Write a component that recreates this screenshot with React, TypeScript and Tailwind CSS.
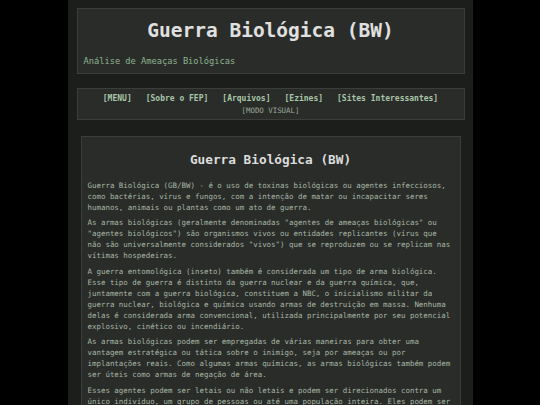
export default function App() {
  const links = ["[MENU]", "[Sobre o FEP]", "[Arquivos]", "[Ezines]", "[Sites Interessantes]"];

  return (
    <div className="min-h-screen bg-black font-['DejaVu_Sans_Mono',monospace]">
      <div className="mx-auto w-[405px] min-h-screen bg-[#1c1e1c] px-[9px] pt-[8px] pr-[8px]">
        <header className="h-[66px] border border-[#3c3e3c] bg-[#2a2c2a] px-[6px] pt-[10px]">
          <h1 className="text-center text-[19.5px] font-bold leading-[24px] text-[#e0e0e0]">
            Guerra Biológica (BW)
          </h1>
          <p className="mt-[12px] text-[8.7px] leading-[12px] text-[#8fb58f]">
            Análise de Ameaças Biológicas
          </p>
        </header>

        <nav className="mt-[14px] h-[32px] border border-[#3c3e3c] bg-[#2a2c2a] pt-[4px] text-center">
          <div className="flex justify-center gap-[14px] text-[8px] font-bold leading-[12px] text-[#a9c6a9]">
            {links.map((l) => (
              <span key={l}>{l}</span>
            ))}
          </div>
          <div className="text-[7.4px] leading-[11px] text-[#9aaa98]">[MODO VISUAL]</div>
        </nav>

        <main className="mx-[4px] mt-[16px] border border-[#3c3e3c] bg-[#2a2c2a] px-[6px] pt-[14px] pb-4">
          <h2 className="text-center text-[12.75px] font-bold leading-[18px] text-[#dcdcdc]">
            Guerra Biológica (BW)
          </h2>
          <div className="mt-[11px] space-y-[4.4px] text-[7.44px] leading-[11px] text-[#a6b6a3] [text-rendering:geometricPrecision]">
            <p>
              Guerra Biológica (GB/BW) - é o uso de toxinas biológicas ou agentes infecciosos,
              como bactérias, vírus e fungos, com a intenção de matar ou incapacitar seres
              humanos, animais ou plantas como um ato de guerra.
            </p>
            <p>
              As armas biológicas (geralmente denominadas "agentes de ameaças biológicas" ou
              "agentes biológicos") são organismos vivos ou entidades replicantes (vírus que
              não são universalmente considerados "vivos") que se reproduzem ou se replicam nas
              vítimas hospedeiras.
            </p>
            <p>
              A guerra entomológica (inseto) também é considerada um tipo de arma biológica.
              Esse tipo de guerra é distinto da guerra nuclear e da guerra química, que,
              juntamente com a guerra biológica, constituem a NBC, o inicialismo militar da
              guerra nuclear, biológica e química usando armas de destruição em massa. Nenhuma
              delas é considerada arma convencional, utilizada principalmente por seu potencial
              explosivo, cinético ou incendiário.
            </p>
            <p>
              As armas biológicas podem ser empregadas de várias maneiras para obter uma
              vantagem estratégica ou tática sobre o inimigo, seja por ameaças ou por
              implantações reais. Como algumas armas químicas, as armas biológicas também podem
              ser úteis como armas de negação de área.
            </p>
            <p>
              Esses agentes podem ser letais ou não letais e podem ser direcionados contra um
              único indivíduo, um grupo de pessoas ou até uma população inteira. Eles podem ser
              desenvolvidos, adquiridos, armazenados ou implantados por estados-nação ou por
              grupos não nacionais.
            </p>
          </div>
        </main>
      </div>
    </div>
  );
}
